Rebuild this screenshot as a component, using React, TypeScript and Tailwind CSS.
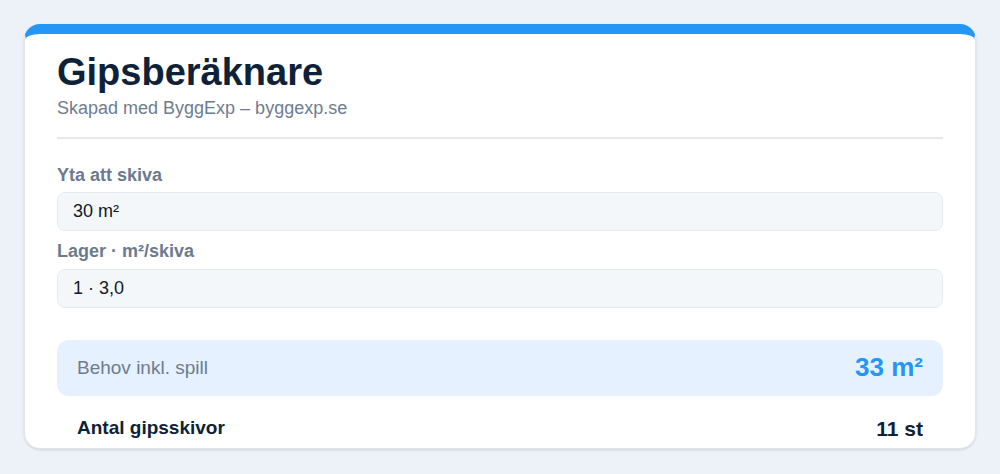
export default function App() {
  return (
    <div
      className="min-h-screen w-full bg-[#edf1f8] p-6"
      style={{ fontFamily: '"Liberation Sans", Arial, Helvetica, sans-serif' }}
    >
      <div className="h-[425px] overflow-hidden rounded-2xl border border-[#e2e6ec] border-t-[10px] border-t-[#2396f6] bg-white px-8 pt-4 shadow-sm">
        <h1 className="text-[38px] font-bold leading-[1.2] text-[#0d2238]">
          Gipsberäknare
        </h1>
        <p className="text-[18px] leading-[1.4] text-[#6e7c8f]">
          Skapad med ByggExp – byggexp.se
        </p>
        <div className="mt-4 h-[2px] bg-[#e6e8ec]" />

        <div className="mt-6">
          <label className="mb-[5px] block text-[18px] font-bold leading-6 text-[#6b7a8e]">
            Yta att skiva
          </label>
          <div className="flex h-[39px] items-center rounded-lg border border-[#e5eaf0] bg-[#f4f7fa] px-[15px] text-[18px] text-[#111827]">
            30 m²
          </div>
        </div>

        <div className="mt-2">
          <label className="mb-1.5 block text-[18px] font-bold leading-6 text-[#6b7a8e]">
            Lager · m²/skiva
          </label>
          <div className="flex h-[39px] items-center rounded-lg border border-[#e5eaf0] bg-[#f4f7fa] px-[15px] text-[18px] text-[#111827]">
            1 · 3,0
          </div>
        </div>

        <div className="mt-8 flex h-14 items-center justify-between rounded-xl bg-[#e5f1fe] px-5">
          <span className="text-[19px] text-[#6e7c8f]">Behov inkl. spill</span>
          <span className="text-[26px] font-bold text-[#2396f6]">33 m²</span>
        </div>

        <div className="flex items-center justify-between px-5 pt-[17px]">
          <span className="text-[19px] font-bold text-[#0d2238]">Antal gipsskivor</span>
          <span className="text-[21px] font-bold text-[#0d2238]">11 st</span>
        </div>
      </div>
    </div>
  );
}
